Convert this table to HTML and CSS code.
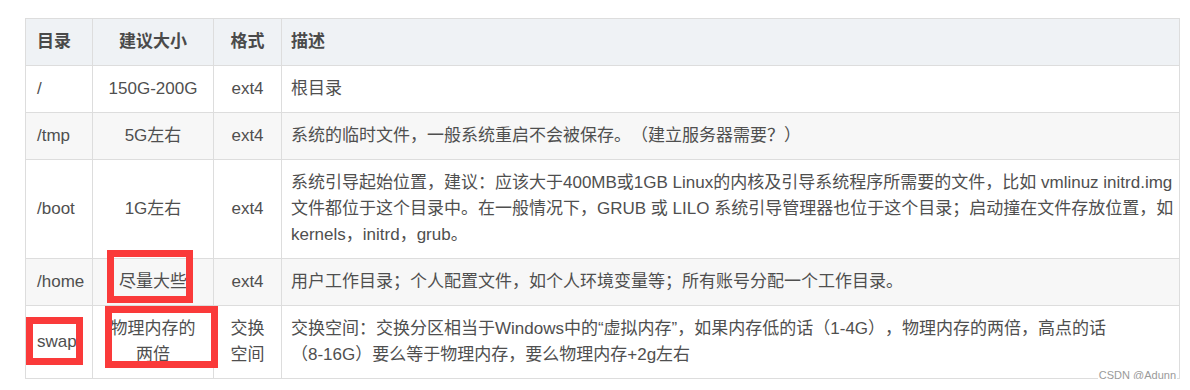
FILE: index.html
```html
<!DOCTYPE html>
<html lang="zh">
<head>
<meta charset="utf-8">
<title>目录分区</title>
<link rel="stylesheet" href="styles.css">
</head>
<body>
<div class="wrap">
  <table class="tbl">
    <colgroup>
      <col class="c1"><col class="c2"><col class="c3"><col class="c4">
    </colgroup>
    <thead>
      <tr><th class="left">目录</th><th>建议大小</th><th>格式</th><th class="desc">描述</th></tr>
    </thead>
    <tbody>
      <tr><td class="left">/</td><td>150G-200G</td><td>ext4</td><td class="desc">根目录</td></tr>
      <tr><td class="left">/tmp</td><td>5G左右</td><td>ext4</td><td class="desc">系统的临时文件，一般系统重启不会被保存。（建立服务器需要？）</td></tr>
      <tr><td class="left">/boot</td><td>1G左右</td><td>ext4</td><td class="desc">系统引导起始位置，建议：应该大于400MB或1GB Linux的内核及引导系统程序所需要的文件，比如 vmlinuz initrd.img<br>文件都位于这个目录中。在一般情况下，GRUB 或 LILO 系统引导管理器也位于这个目录；启动撞在文件存放位置，如<br>kernels，initrd，grub。</td></tr>
      <tr><td class="left">/home</td><td>尽量大些</td><td>ext4</td><td class="desc">用户工作目录；个人配置文件，如个人环境变量等；所有账号分配一个工作目录。</td></tr>
      <tr><td class="left">swap</td><td>物理内存的两倍</td><td>交换空间</td><td class="desc">交换空间：交换分区相当于Windows中的“虚拟内存”，如果内存低的话（1-4G），物理内存的两倍，高点的话<span class="nw">（8-16G）</span>要么等于物理内存，要么物理内存+2g左右</td></tr>
    </tbody>
  </table>
  <div class="mark mark-home"></div>
  <div class="mark mark-size"></div>
  <div class="mark mark-swap"></div>
  <div class="wm">CSDN @Adunn</div>
</div>
</body>
</html>
```
FILE: styles.css
```css
html, body {
  margin: 0;
  padding: 0;
  background: #ffffff;
}
body {
  font-family: "Liberation Sans", "Noto Sans CJK SC", sans-serif;
  font-size: 17px;
  color: #4f4f4f;
  text-autospace: no-autospace;
  text-spacing-trim: space-all;
}
.wrap {
  position: relative;
  margin: 18px 0 0 25px;
  width: 1155px;
}
.tbl {
  width: 1155px;
  border-collapse: collapse;
  table-layout: fixed;
}
.c1 { width: 67px; }
.c2 { width: 121px; }
.c3 { width: 68px; }
.c4 { width: auto; }
.tbl th, .tbl td {
  border: 1px solid #dddddd;
  padding: 10px 11px;
  line-height: 26px;
  text-align: center;
  vertical-align: middle;
}
.tbl th {
  background: #eff2f5;
  font-weight: bold;
  color: #4a4a4a;
}
.tbl .left { text-align: left; padding-right: 2px; }
.tbl .desc { text-align: left; padding: 10px 2px 10px 9px; }
.nw { white-space: nowrap; }
.tbl tbody tr:nth-child(even) td { background: #f7f7f7; }
.tbl tbody tr:nth-child(odd) td { background: #ffffff; }
.mark {
  position: absolute;
  border: 7px solid #fa3a3a;
  box-sizing: border-box;
}
.mark-home { left: 82px; top: 232px; width: 86px; height: 53px; }
.mark-size { left: 80px; top: 288px; width: 113px; height: 62px; }
.mark-swap { left: 1px; top: 299px; width: 57px; height: 48px; }
.wm {
  position: absolute;
  right: 3px;
  top: 350px;
  padding: 0 1px;
  background: #ffffff;
  color: #9a9a9a;
  font-size: 11px;
  line-height: 14px;
  white-space: nowrap;
}
```
